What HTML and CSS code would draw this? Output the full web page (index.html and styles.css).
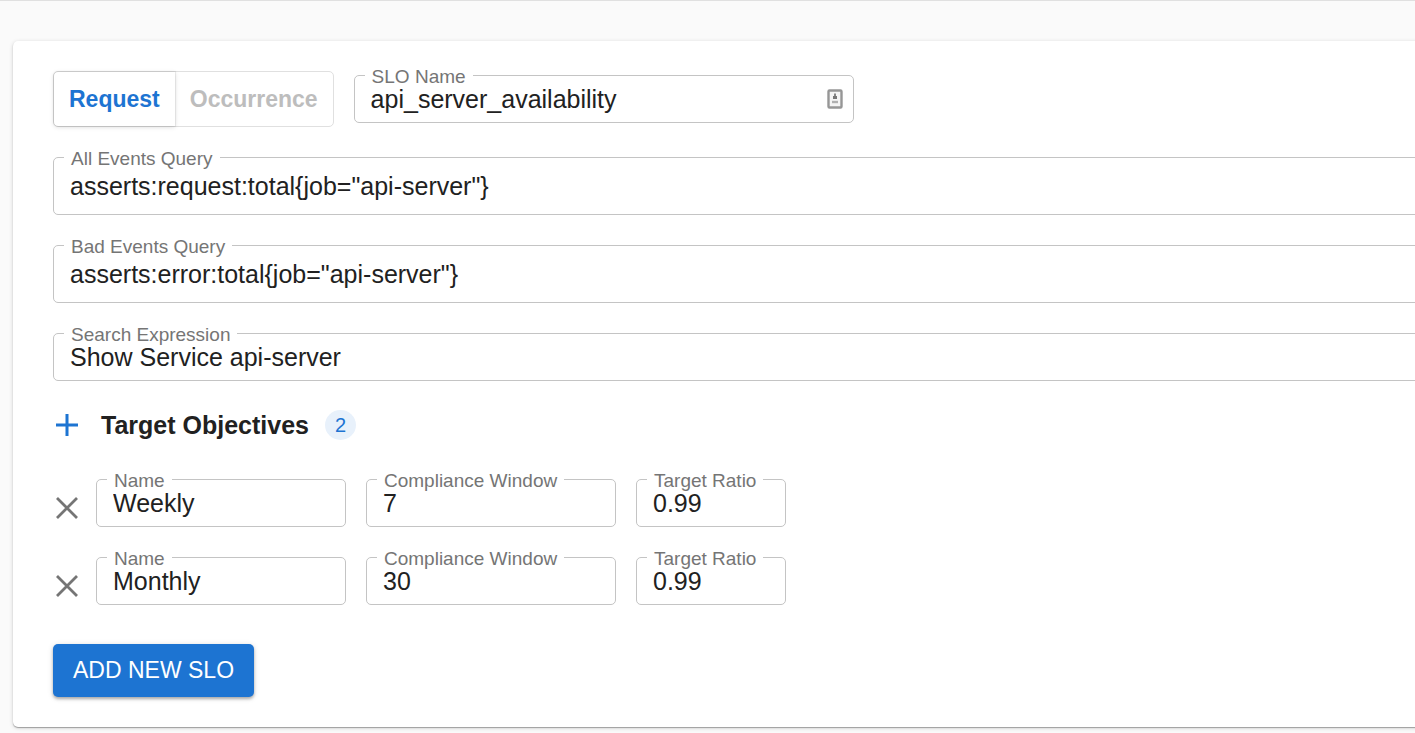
FILE: index.html
```html
<!DOCTYPE html>
<html lang="en">
<head>
<meta charset="utf-8">
<title>SLO editor</title>
<link rel="stylesheet" href="styles.css">
</head>
<body>
<main class="page">
  <form class="card">
    <div class="top-row">
      <div class="toggle" role="group" aria-label="SLO type">
        <button class="toggle-button toggle-active" type="button" aria-pressed="true">Request</button>
        <button class="toggle-button" type="button" aria-pressed="false">Occurrence</button>
      </div>
      <div class="field field-name">
        <label for="slo-name">SLO Name</label>
        <input id="slo-name" type="text" value="api_server_availability">
        <svg class="autofill" viewBox="0 0 16 20" aria-hidden="true">
          <rect x="1.5" y="1.5" width="13" height="17" rx="1" fill="#f4f4f4" stroke="#969696" stroke-width="2.4"/>
          <path d="M8 4.500v3" stroke="#888" stroke-width="2"/>
          <path d="M6 8.500h4" stroke="#777" stroke-width="3"/>
          <path d="M5 13h6" stroke="#b0b0b0" stroke-width="2.400"/>
        </svg>
      </div>
    </div>
    <div class="field field-tall">
      <label for="all-events">All Events Query</label>
      <input id="all-events" type="text" value="asserts:request:total{job=&quot;api-server&quot;}">
    </div>
    <div class="field field-tall">
      <label for="bad-events">Bad Events Query</label>
      <input id="bad-events" type="text" value="asserts:error:total{job=&quot;api-server&quot;}">
    </div>
    <div class="field">
      <label for="search">Search Expression</label>
      <input id="search" type="text" value="Show Service api-server">
    </div>
    <div class="section-head">
      <button class="icon-button add" type="button" aria-label="Add objective">
        <svg viewBox="0 0 28 28"><path d="M14 3v22M3 14h22" stroke="currentColor" stroke-width="3"/></svg>
      </button>
      <h2>Target Objectives</h2>
      <span class="badge">2</span>
    </div>
    <div class="objectives">
      <div class="objective">
        <button class="icon-button remove" type="button" aria-label="Remove Weekly">
          <svg viewBox="0 0 28 28"><path d="M4 4l20 20M24 4L4 24" stroke="currentColor" stroke-width="2.800"/></svg>
        </button>
        <div class="field field-medium"><label for="name-1">Name</label><input id="name-1" type="text" value="Weekly"></div>
        <div class="field field-medium"><label for="window-1">Compliance Window</label><input id="window-1" type="text" value="7"></div>
        <div class="field field-small"><label for="ratio-1">Target Ratio</label><input id="ratio-1" type="text" value="0.99"></div>
      </div>
      <div class="objective">
        <button class="icon-button remove" type="button" aria-label="Remove Monthly">
          <svg viewBox="0 0 28 28"><path d="M4 4l20 20M24 4L4 24" stroke="currentColor" stroke-width="2.800"/></svg>
        </button>
        <div class="field field-medium"><label for="name-2">Name</label><input id="name-2" type="text" value="Monthly"></div>
        <div class="field field-medium"><label for="window-2">Compliance Window</label><input id="window-2" type="text" value="30"></div>
        <div class="field field-small"><label for="ratio-2">Target Ratio</label><input id="ratio-2" type="text" value="0.99"></div>
      </div>
    </div>
    <button class="submit" type="button">ADD NEW SLO</button>
  </form>
</main>
</body>
</html>
```
FILE: styles.css
```css
* {
  box-sizing: border-box;
}

body {
  margin: 0;
  background: #fafafa;
  color: #212121;
  font-family: "Liberation Sans", Arial, sans-serif;
  font-size: 25px;
}

button,
input {
  font: inherit;
  color: inherit;
}

button {
  border: 0;
  padding: 0;
  background: none;
  cursor: pointer;
}

.page {
  border-top: 1px solid #e0e0e0;
  padding: 40px 0 6px 13px;
  overflow-x: hidden;
}

/* The card continues past the right edge of the window. */
.card {
  display: flex;
  flex-direction: column;
  gap: 30px;
  margin-right: -80px;
  padding: 30px 40px;
  background: #fff;
  border-radius: 5px;
  box-shadow: 0 1px 1px rgba(0, 0, 0, 0.3), 0 1px 4px rgba(0, 0, 0, 0.16);
}

.top-row {
  display: flex;
  align-items: center;
  gap: 20px;
}

.toggle {
  display: flex;
  height: 56px;
  border: 1px solid #e0e0e0;
  border-radius: 5px;
}

.toggle-button {
  padding: 0 15px;
  font-size: 23px;
  font-weight: 700;
  color: #bdbdbd;
}

.toggle-active {
  border-radius: 4px 0 0 4px;
  color: #1d74d2;
  box-shadow: 0 0 1px 1px rgba(0, 0, 0, 0.07), 0 1px 5px rgba(0, 0, 0, 0.14);
}

.field {
  position: relative;
  height: 48px;
  border: 1px solid #c4c4c4;
  border-radius: 5px;
}

.field label {
  position: absolute;
  top: -9px;
  left: 10px;
  padding: 0 7px;
  background: #fff;
  color: #757575;
  font-size: 19px;
  line-height: 20px;
  white-space: nowrap;
}

.field input {
  position: relative;
  display: block;
  width: 100%;
  height: 100%;
  border: 0;
  padding: 0 16px;
  background: transparent;
  outline: 0;
}

.field-tall {
  height: 58px;
}

.field-name {
  width: 500px;
}

.field-medium {
  width: 250px;
}

.field-small {
  width: 150px;
}

.autofill {
  position: absolute;
  top: 13px;
  right: 10px;
  width: 16px;
  height: 20px;
}

.section-head {
  display: flex;
  align-items: center;
  height: 28px;
}

.section-head h2 {
  margin: 0 16px 0 20px;
  font-size: 25px;
}

.badge {
  width: 31px;
  height: 30px;
  border-radius: 50%;
  background: #e8f1fb;
  color: #1d74d2;
  font-size: 20px;
  line-height: 30px;
  text-align: center;
}

.icon-button {
  width: 28px;
  height: 28px;
}

.icon-button svg {
  display: block;
}

.add {
  color: #1d74d2;
}

.remove {
  margin: 10px -5px 0 0;
  color: #757575;
}

.objectives {
  display: grid;
  gap: 30px;
  margin: 10px 0 9px;
}

.objective {
  display: flex;
  align-items: center;
  gap: 20px;
}

.submit {
  align-self: flex-start;
  padding: 0 20px;
  border-radius: 5px;
  background: #1d74d2;
  color: #fff;
  font-size: 23px;
  line-height: 53px;
  box-shadow: 0 2px 3px rgba(0, 0, 0, 0.28), 0 1px 6px rgba(0, 0, 0, 0.12);
}
```
